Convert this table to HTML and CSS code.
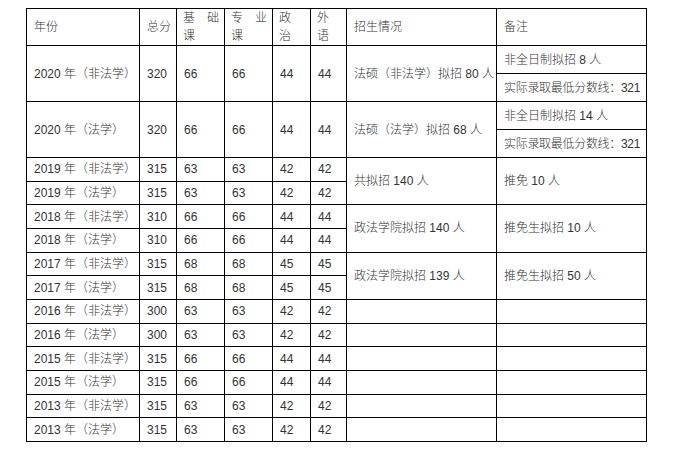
FILE: index.html
```html
<!DOCTYPE html>
<html lang="zh-CN">
<head>
<meta charset="utf-8">
<title>法硕分数线</title>
<link rel="stylesheet" href="styles.css">
</head>
<body>
<div class="page">
<table class="scores">
  <colgroup>
    <col class="c-year"><col class="c-total"><col class="c-base"><col class="c-major"><col class="c-pol"><col class="c-lang"><col class="c-plan"><col class="c-note">
  </colgroup>
  <thead>
    <tr class="head">
      <th>年份</th>
      <th>总分</th>
      <th class="wrap"><span class="spread"><span>基</span><span>础</span></span>课</th>
      <th class="wrap"><span class="spread"><span>专</span><span>业</span></span>课</th>
      <th class="wrap">政<br>治</th>
      <th class="wrap">外<br>语</th>
      <th>招生情况</th>
      <th>备注</th>
    </tr>
  </thead>
  <tbody>
    <tr class="sub">
      <td rowspan="2">2020 年（非法学）</td><td rowspan="2">320</td><td rowspan="2">66</td><td rowspan="2">66</td><td rowspan="2">44</td><td rowspan="2">44</td>
      <td rowspan="2">法硕（非法学）拟招 80 人</td>
      <td>非全日制拟招 8 人</td>
    </tr>
    <tr class="sub"><td class="tight">实际录取最低分数线：321</td></tr>
    <tr class="sub">
      <td rowspan="2">2020 年（法学）</td><td rowspan="2">320</td><td rowspan="2">66</td><td rowspan="2">66</td><td rowspan="2">44</td><td rowspan="2">44</td>
      <td rowspan="2">法硕（法学）拟招 68 人</td>
      <td>非全日制拟招 14 人</td>
    </tr>
    <tr class="sub"><td class="tight">实际录取最低分数线：321</td></tr>

    <tr class="row"><td>2019 年（非法学）</td><td>315</td><td>63</td><td>63</td><td>42</td><td>42</td><td rowspan="2">共拟招 140 人</td><td rowspan="2">推免 10 人</td></tr>
    <tr class="row"><td>2019 年（法学）</td><td>315</td><td>63</td><td>63</td><td>42</td><td>42</td></tr>
    <tr class="row"><td>2018 年（非法学）</td><td>310</td><td>66</td><td>66</td><td>44</td><td>44</td><td rowspan="2">政法学院拟招 140 人</td><td rowspan="2">推免生拟招 10 人</td></tr>
    <tr class="row"><td>2018 年（法学）</td><td>310</td><td>66</td><td>66</td><td>44</td><td>44</td></tr>
    <tr class="row"><td>2017 年（非法学）</td><td>315</td><td>68</td><td>68</td><td>45</td><td>45</td><td rowspan="2">政法学院拟招 139 人</td><td rowspan="2">推免生拟招 50 人</td></tr>
    <tr class="row"><td>2017 年（法学）</td><td>315</td><td>68</td><td>68</td><td>45</td><td>45</td></tr>
    <tr class="row"><td>2016 年（非法学）</td><td>300</td><td>63</td><td>63</td><td>42</td><td>42</td><td></td><td></td></tr>
    <tr class="row"><td>2016 年（法学）</td><td>300</td><td>63</td><td>63</td><td>42</td><td>42</td><td></td><td></td></tr>
    <tr class="row"><td>2015 年（非法学）</td><td>315</td><td>66</td><td>66</td><td>44</td><td>44</td><td></td><td></td></tr>
    <tr class="row"><td>2015 年（法学）</td><td>315</td><td>66</td><td>66</td><td>44</td><td>44</td><td></td><td></td></tr>
    <tr class="row"><td>2013 年（非法学）</td><td>315</td><td>63</td><td>63</td><td>42</td><td>42</td><td></td><td></td></tr>
    <tr class="row"><td>2013 年（法学）</td><td>315</td><td>63</td><td>63</td><td>42</td><td>42</td><td></td><td></td></tr>
  </tbody>
</table>
</div>
</body>
</html>
```

FILE: styles.css
```css
html, body {
  margin: 0;
  padding: 0;
  background: #ffffff;
}

.page {
  padding: 8px 0 0 26px;
}

.scores {
  border-collapse: collapse;
  table-layout: fixed;
  width: 620px;
  font-family: "Liberation Sans", "Noto Sans CJK SC", sans-serif;
  font-size: 12px;
  font-weight: 300;
  color: #333333;
}

.c-year { width: 113px; }
.c-total { width: 37px; }
.c-base { width: 48px; }
.c-major { width: 48px; }
.c-pol { width: 38px; }
.c-lang { width: 36px; }
.c-plan { width: 150px; }
.c-note { width: 150px; }

.scores th,
.scores td {
  border: 1px solid #000;
  padding: 0 6px 0 7px;
  text-align: left;
  vertical-align: middle;
  font-weight: 300;
  white-space: nowrap;
  line-height: 14px;
}

.scores td.tight {
  letter-spacing: -0.3px;
}

.scores th.wrap {
  line-height: 18px;
  padding: 0 5px 0 6px;
}

.spread {
  display: flex;
  justify-content: space-between;
}

.head { height: 37px; }
.sub { height: 28px; }
.row { height: 23.67px; }
```
